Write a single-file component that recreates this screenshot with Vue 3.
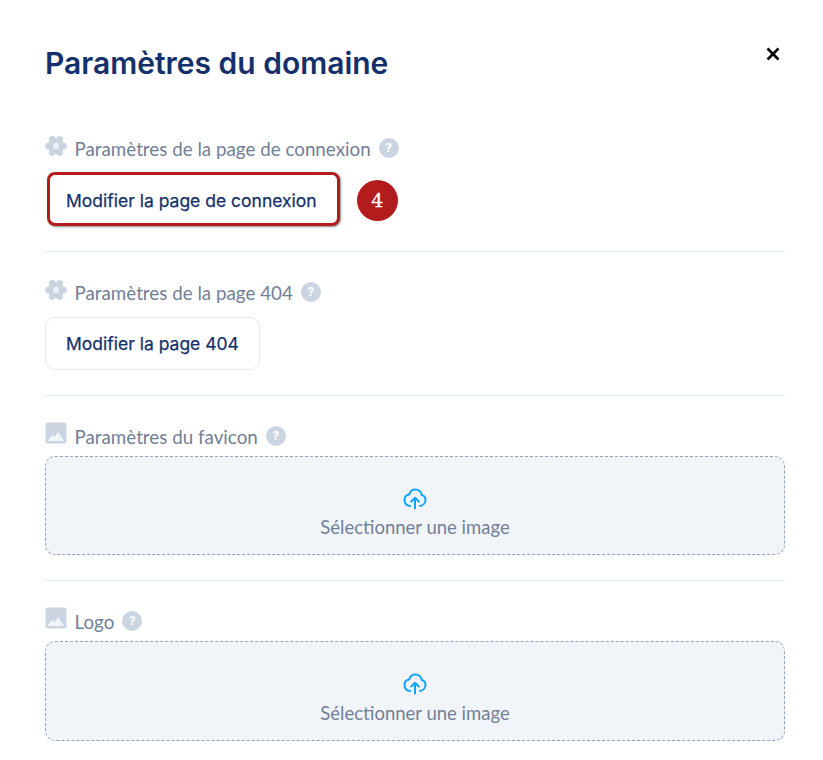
<script setup>
const sections = [
  { id: 1, label: 'Paramètres de la page de connexion', icon: 'gear', button: 'Modifier la page de connexion', marked: true },
  { id: 2, label: 'Paramètres de la page 404', icon: 'gear', button: 'Modifier la page 404' },
  { id: 3, label: 'Paramètres du favicon', icon: 'image' },
  { id: 4, label: 'Logo', icon: 'image' },
]
const lobes = [0, 60, 120, 180, 240, 300].map((a) => ({
  x: 11 + 7.6 * Math.cos((a * Math.PI) / 180),
  y: 11 + 7.6 * Math.sin((a * Math.PI) / 180),
}))
</script>

<template>
  <main class="modal">
    <header class="head">
      <h1>Paramètres du domaine</h1>
      <svg class="close" width="14" height="14" viewBox="0 0 14 14"><path d="M1.500 1.500l11 11M12.500 1.500l-11 11" stroke="#000" stroke-width="2.600" fill="none" /></svg>
    </header>

    <section v-for="s in sections" :key="s.id" class="section" :class="{ upload: !s.button }">
      <div class="label">
        <svg v-if="s.icon === 'gear'" class="lead gear" width="22" height="22" viewBox="0 0 22 22">
          <circle v-for="(l, i) in lobes" :key="i" :cx="l.x" :cy="l.y" r="3.300" fill="#cbd5e1" />
          <circle cx="11" cy="11" r="8" fill="#cbd5e1" />
          <circle cx="11" cy="11" r="3" fill="#eef2f7" />
        </svg>
        <svg v-else class="lead image" width="22" height="22" viewBox="0 0 22 22">
          <rect x="0.500" y="0.500" width="21" height="21" rx="2" fill="#cbd5e1" />
          <path d="M2.500 19l4.500-6 2.500 2 3.500-5 6 9z" fill="#f1f5f9" />
        </svg>
        <span>{{ s.label }}</span>
        <span class="help">?</span>
      </div>
      <div v-if="s.button" class="actions">
        <button class="btn" :class="{ marked: s.marked }">{{ s.button }}</button>
        <span v-if="s.marked" class="badge">4</span>
      </div>
      <div v-else class="drop">
        <svg width="24" height="24" viewBox="0 0 24 24" fill="none" stroke="#0ea5ff" stroke-width="2" stroke-linecap="round" stroke-linejoin="round">
          <path d="M7 20C3.800 19.500 1.500 17.200 1.500 14c0-2.800 2-5 4.600-5.400C7 5.600 9.300 3.500 12.300 3.500c3.400 0 6 2.400 6.400 5.500 2.200.4 3.800 2.400 3.800 4.900 0 3-2.300 5.600-5.500 6" />
          <path d="M12 22.500V12M8.200 15.500l3.800-3.800 3.800 3.800" />
        </svg>
        <span class="drop-text">Sélectionner une image</span>
      </div>
    </section>
  </main>
</template>

<style>
body { background: #fff; }
</style>

<style scoped>
.modal {
  width: 823px;
  height: 760px;
  box-sizing: border-box;
  padding: 44px 38px 0 45px;
  overflow: hidden;
  background: #fff;
  font-family: Inter, "Liberation Sans", sans-serif;
}
.head {
  display: flex;
  justify-content: space-between;
  align-items: flex-start;
  height: 64px;
  padding-right: 5px;
}
h1 {
  margin: 0;
  font-size: 30px;
  line-height: 38px;
  font-weight: 600;
  color: #14306b;
}
.close { margin-top: 3px; }
.section {
  padding: 29px 0 25px;
  border-bottom: 1px solid #e2e8f0;
}
.section:last-child { border-bottom: 0; }
.label {
  display: flex;
  align-items: center;
  height: 22px;
  margin-bottom: 14px;
  font-family: Lato, "Liberation Sans", sans-serif;
  font-size: 18.800px;
  color: #718096;
}
.upload .label { margin-bottom: 9px; }
.lead { margin-right: 7.500px; flex: none; }
.gear { margin-top: -5px; }
.image { margin-top: -7px; }
.help {
  width: 20px;
  height: 20px;
  margin-left: 8px;
  border-radius: 50%;
  background: #cbd5e1;
  color: #fff;
  font: 700 12px/20px Inter, sans-serif;
  text-align: center;
}
.actions {
  display: flex;
  align-items: center;
  gap: 17px;
  height: 53px;
}
.btn {
  height: 53px;
  padding: 0 20px;
  border: 1px solid #e2e8f0;
  border-radius: 10px;
  background: #fff;
  color: #14306b;
  font: 400 17.500px Inter, sans-serif;
  -webkit-text-stroke: 0.25px #14306b;
}
.btn.marked {
  height: 54px;
  margin-left: 2px;
  margin-top: -1px;
  border: 3px solid #b21c1c;
  border-radius: 8px;
  box-shadow: 1px 1px 2px #555a;
  padding: 2px 20px 0 16px;
}
.badge {
  width: 41px;
  height: 41px;
  margin-top: 1px;
  border-radius: 50%;
  background: #b21c1c;
  color: #fff;
  font: 400 19px/41px "DejaVu Serif", serif;
  -webkit-text-stroke: 0.3px #fff;
  text-align: center;
}
.drop {
  height: 99px;
  box-sizing: border-box;
  padding-top: 29px;
  display: flex;
  flex-direction: column;
  align-items: center;
  gap: 6px;
  border: 1px dashed #94a3b8;
  border-radius: 10px;
  background: #f1f4f9;
  color: #718096;
}
.section:last-child .drop { height: 100px; gap: 7px; }
.drop-text {
  font-family: Lato, "Liberation Sans", sans-serif;
  font-size: 18.500px;
  line-height: 22px;
}
</style>
